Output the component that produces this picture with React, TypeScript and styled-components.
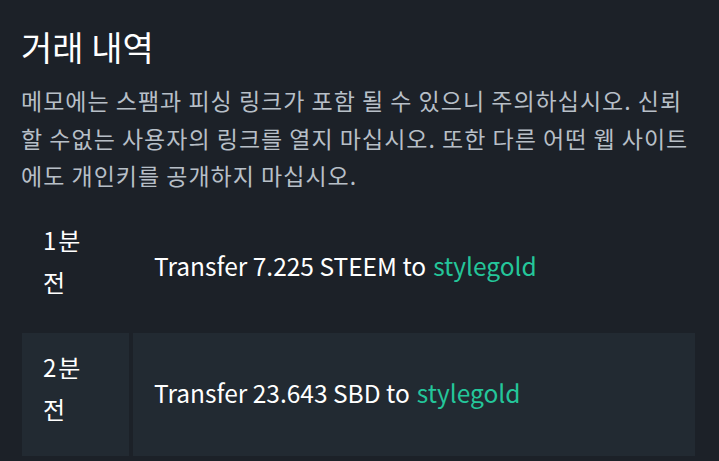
import React from "react";
import styled, { createGlobalStyle } from "styled-components";

const GlobalStyle = createGlobalStyle`
  html, body {
    margin: 0;
    padding: 0;
    background: #1c2128;
  }
  body {
    font-family: "Noto Sans CJK KR", "Noto Sans", sans-serif;
    color: #ffffff;
  }
`;

interface Transfer {
    time: string
    amount: string
    to: string
}

const transfers: Transfer[] = [
    {time: "1분 전", amount: "7.225 STEEM", to: "stylegold"},
    {time: "2분 전", amount: "23.643 SBD", to: "stylegold"},
];

export default function App() {
    return (
        <>
            <GlobalStyle/>
            <Page>
                <Title>거래 내역</Title>
                <Notice>
                    메모에는 스팸과 피싱 링크가 포함 될 수 있으니 주의하십시오. 신뢰할 수없는 사용자의 링크를 열지 마십시오. 또한 다른 어떤 웹 사이트에도 개인키를 공개하지 마십시오.
                </Notice>
                <List>
                    {transfers.map((t, index) => (
                        <Row key={index} striped={index % 2 === 1}>
                            <TimeCell>{t.time}</TimeCell>
                            <DescCell>
                                Transfer {t.amount} to <UserLink href="#">{t.to}</UserLink>
                            </DescCell>
                        </Row>
                    ))}
                </List>
            </Page>
        </>
    );
}

const Page = styled.div`
  padding: 27px 21px 0 21px;
  width: 719px;
  box-sizing: border-box;
`;

const Title = styled.h1`
  margin: 0;
  font-size: 34px;
  font-weight: 400;
  line-height: 40px;
  color: #ffffff;
`;

const Notice = styled.p`
  margin: 15px 0 0 0;
  font-size: 23px;
  line-height: 37.5px;
  letter-spacing: 1px;
  color: #b7bfc7;
`;

const List = styled.div`
  display: flex;
  flex-direction: column;
  gap: 4px;
  margin: 11px 3px 0 1px;
`;

const Row = styled.div<{striped: boolean}>`
  display: grid;
  grid-template-columns: 107px 1fr;
  column-gap: 4px;

  & > div {
    background: ${({striped}) => (striped ? "#222a32" : "transparent")};
  }
`;

const TimeCell = styled.div`
  box-sizing: border-box;
  padding: 13px 26px 26px 21px;
  font-size: 24px;
  line-height: 42px;
  letter-spacing: 2px;
  color: #ffffff;
`;

const DescCell = styled.div`
  display: flex;
  align-items: center;
  padding: 0 21px 3px;
  font-size: 24.5px;
  color: #ffffff;
`;

const UserLink = styled.a`
  color: #24c69a;
  text-decoration: none;
  margin-left: 7px;
`;
